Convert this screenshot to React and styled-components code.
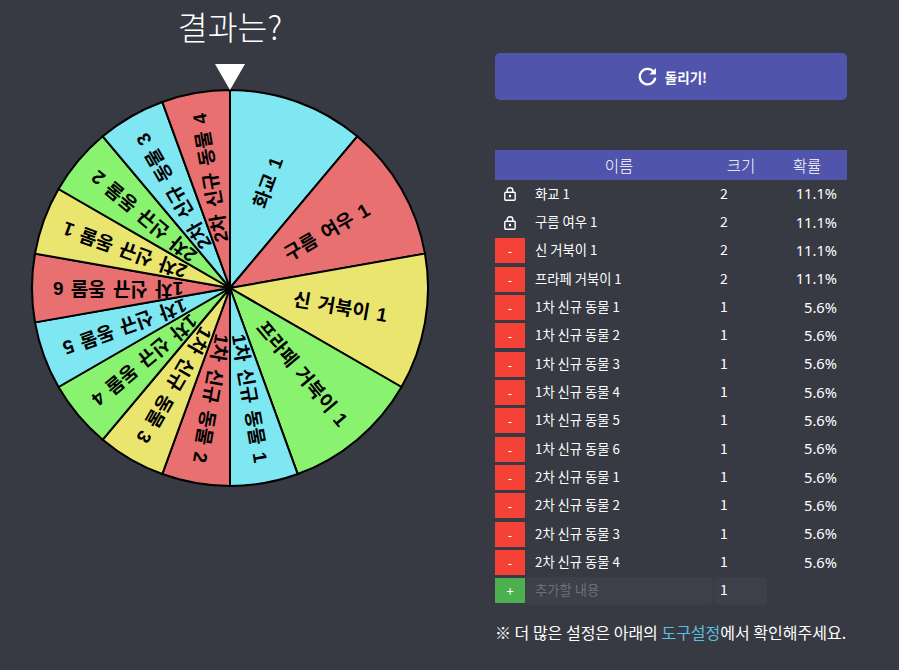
import React from 'react';
import styled, { createGlobalStyle } from 'styled-components';

const GlobalStyle = createGlobalStyle`
	html, body {
		margin: 0;
		padding: 0;
		background: #373a42;
	}
	body {
		font-family: "Noto Sans CJK KR", "Noto Sans", sans-serif;
		color: #fff;
	}
`;

const Page = styled.div`
	width: 899px;
	height: 670px;
	display: flex;
	overflow: hidden;
`;

const WheelColumn = styled.div`
	width: 460px;
	display: flex;
	flex-direction: column;
	align-items: center;
`;

const Title = styled.h1`
	margin: 0;
	height: 64px;
	line-height: 52px;
	font-size: 32.5px;
	font-weight: 300;
`;

const Pointer = styled.div`
	width: 0;
	height: 0;
	border-left: 15px solid transparent;
	border-right: 15px solid transparent;
	border-top: 26px solid #fff;
	margin-bottom: -2px;
	position: relative;
	z-index: 1;
`;

const WheelSvg = styled.svg`
	display: block;
	width: 400px;
	height: 400px;
`;

const SideColumn = styled.div`
	width: 352px;
	margin-left: 35px;
	padding-top: 53px;
`;

const SpinButton = styled.button`
	width: 100%;
	height: 47px;
	border: 0;
	border-radius: 5px;
	background: #5154ab;
	color: #fff;
	font-family: "Noto Sans CJK KR", sans-serif;
	font-size: 13.5px;
	font-weight: 700;
	display: flex;
	align-items: center;
	justify-content: center;
	gap: 8px;
	padding: 0 0 0 3px;
`;

const Table = styled.div`
	margin-top: 50px;
`;

const HeaderRow = styled.div`
	display: grid;
	grid-template-columns: 30px 188px 56px 76px;
	height: 30px;
	background: #5154ab;
	align-items: center;
	font-size: 15.5px;
	font-weight: 300;
`;

const HeaderCell = styled.div`
	text-align: center;
`;

const Row = styled.div`
	display: grid;
	grid-template-columns: 30px 195px 68px 59px;
	height: 28.35px;
	align-items: center;
`;

const LockCell = styled.div`
	display: flex;
	justify-content: center;
`;

const RowButton = styled.div`
	width: 30px;
	height: 25px;
	background: ${p => p.$add ? '#4caf50' : '#f44336'};
	color: #fff;
	font-size: 13px;
	display: flex;
	align-items: center;
	justify-content: center;
`;

const NameCell = styled.div`
	font-size: 13.3px;
	padding-left: 10px;
	padding-bottom: 2px;
`;

const SizeCell = styled.div`
	font-size: 14px;
	padding-bottom: 3px;
`;

const ChanceCell = styled.div`
	font-family: "Noto Sans", sans-serif;
	font-size: 14.7px;
	text-align: right;
	padding-right: 10px;
	padding-bottom: 2px;
`;

const AddRow = styled.div`
	display: flex;
	align-items: center;
	height: 28px;
`;

const NameInput = styled.input`
	width: 188px;
	height: 28px;
	box-sizing: border-box;
	border: 0;
	border-radius: 5px;
	background: #3e4049;
	color: #fff;
	font: 13.3px "Noto Sans CJK KR", sans-serif;
	padding: 0 10px 2px;
	margin-right: 1px;
	&::placeholder {
		color: #6e7078;
	}
`;

const SizeInput = styled(NameInput)`
	width: 53px;
	padding: 0 6px 3px;
	margin: 0;
	font-size: 14px;
`;

const Note = styled.p`
	margin: 15px 0 0;
	font-size: 16px;
	white-space: nowrap;
`;

const ToolLink = styled.span`
	color: #5bc0de;
`;

const slices = [
	{ name: '화교 1', size: 2, color: '#7fe7f2' },
	{ name: '구름 여우 1', size: 2, color: '#e87070' },
	{ name: '신 거북이 1', size: 2, color: '#eae56f' },
	{ name: '프라페 거북이 1', size: 2, color: '#89f26e' },
	{ name: '1차 신규 동물 1', size: 1, color: '#7fe7f2' },
	{ name: '1차 신규 동물 2', size: 1, color: '#e87070' },
	{ name: '1차 신규 동물 3', size: 1, color: '#eae56f' },
	{ name: '1차 신규 동물 4', size: 1, color: '#89f26e' },
	{ name: '1차 신규 동물 5', size: 1, color: '#7fe7f2' },
	{ name: '1차 신규 동물 6', size: 1, color: '#e87070' },
	{ name: '2차 신규 동물 1', size: 1, color: '#eae56f' },
	{ name: '2차 신규 동물 2', size: 1, color: '#89f26e' },
	{ name: '2차 신규 동물 3', size: 1, color: '#7fe7f2' },
	{ name: '2차 신규 동물 4', size: 1, color: '#e87070' },
];

const total = slices.reduce((sum, s) => sum + s.size, 0);

const point = (deg, r) => {
	const rad = (deg * Math.PI) / 180;
	return [200 + r * Math.sin(rad), 200 - r * Math.cos(rad)];
};

const Wheel = () => {
	let angle = 0;
	return (
		<WheelSvg viewBox="0 0 400 400">
			{slices.map(s => {
				const start = angle;
				const end = angle + (s.size / total) * 360;
				angle = end;
				const [x1, y1] = point(start, 198);
				const [x2, y2] = point(end, 198);
				const mid = (start + end) / 2;
				const [tx, ty] = point(mid, 112);
				return (
					<g key={s.name}>
						<path
							d={`M200 200 L${x1} ${y1} A198 198 0 0 1 ${x2} ${y2} Z`}
							fill={s.color}
							stroke="#000"
							strokeWidth="2"
						/>
						<text
							x={tx}
							y={ty}
							transform={`rotate(${mid - 90} ${tx} ${ty})`}
							textAnchor="middle"
							dominantBaseline="central"
							fontFamily='"Liberation Sans", "Noto Sans CJK KR", sans-serif'
							fontWeight="700"
							fontSize="19"
							wordSpacing="2"
							fill="#000"
						>
							{s.name}
						</text>
					</g>
				);
			})}
		</WheelSvg>
	);
};

const LockIcon = () => (
	<svg width="12" height="14" viewBox="0 0 12 14" fill="none" stroke="#fff" strokeWidth="1.4">
		<rect x="0.8" y="5.2" width="10.4" height="8" rx="1" />
		<path d="M3.2 5.2V3.4a2.8 2.7 0 0 1 5.6 0v1.8" />
		<rect x="5" y="7.8" width="2" height="2.4" fill="#fff" stroke="none" />
	</svg>
);

const SpinIcon = () => (
	<svg width="19" height="19" viewBox="0 0 18 18" fill="none" stroke="#fff" strokeWidth="2.2">
		<path d="M14.6 4.4A7.3 7.3 0 1 0 16.3 10" />
		<path d="M17 1v6.2h-6.2z" fill="#fff" stroke="none" />
	</svg>
);

const App = () => (
	<Page>
		<GlobalStyle />
		<WheelColumn>
			<Title>결과는?</Title>
			<Pointer />
			<Wheel />
		</WheelColumn>
		<SideColumn>
			<SpinButton>
				<SpinIcon />
				돌리기!
			</SpinButton>
			<Table>
				<HeaderRow>
					<HeaderCell />
					<HeaderCell>이름</HeaderCell>
					<HeaderCell>크기</HeaderCell>
					<HeaderCell>확률</HeaderCell>
				</HeaderRow>
				{slices.map((s, i) => (
					<Row key={s.name}>
						{i < 2 ? (
							<LockCell><LockIcon /></LockCell>
						) : (
							<RowButton>-</RowButton>
						)}
						<NameCell>{s.name}</NameCell>
						<SizeCell>{s.size}</SizeCell>
						<ChanceCell>{((s.size / total) * 100).toFixed(1)}%</ChanceCell>
					</Row>
				))}
				<AddRow>
					<RowButton $add>+</RowButton>
					<NameInput placeholder="추가할 내용" readOnly />
					<SizeInput defaultValue="1" readOnly />
				</AddRow>
			</Table>
			<Note>※ 더 많은 설정은 아래의 <ToolLink>도구설정</ToolLink>에서 확인해주세요.</Note>
		</SideColumn>
	</Page>
);

export default App;
